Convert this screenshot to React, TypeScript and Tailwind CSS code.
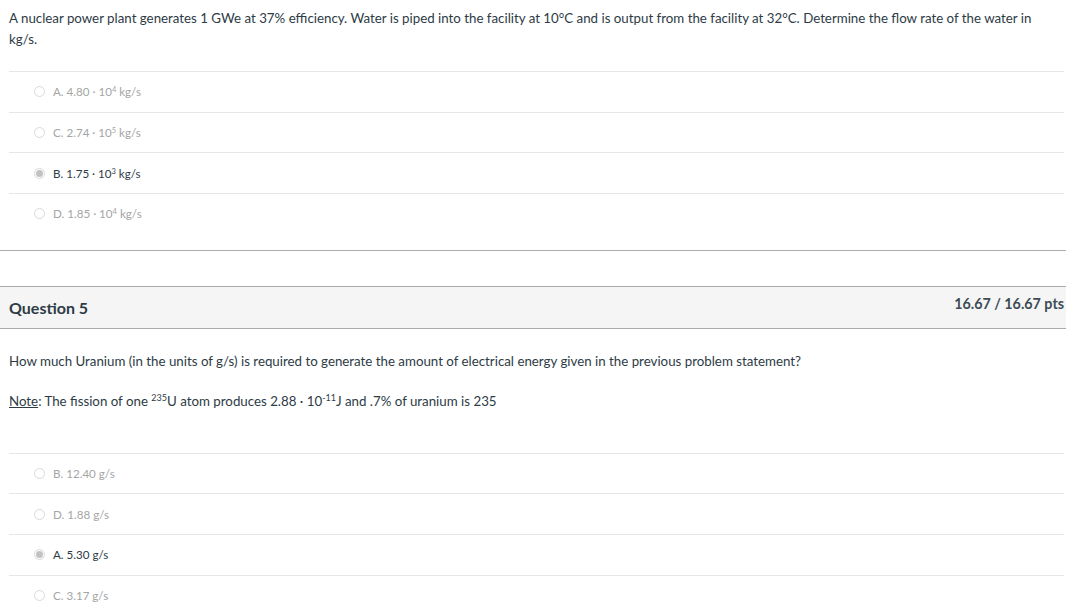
const Q4_ANSWERS = [
  { label: 'A. 4.80 · 10', exp: '4', unit: ' kg/s', selected: false },
  { label: 'C. 2.74 · 10', exp: '5', unit: ' kg/s', selected: false },
  { label: 'B. 1.75 · 10', exp: '3', unit: ' kg/s', selected: true },
  { label: 'D. 1.85 · 10', exp: '4', unit: ' kg/s', selected: false },
]

const Q5_ANSWERS = [
  { label: 'B. 12.40 g/s', selected: false },
  { label: 'D. 1.88 g/s', selected: false },
  { label: 'A. 5.30 g/s', selected: true },
  { label: 'C. 3.17 g/s', selected: false },
]

function Radio({ checked }: { checked: boolean }) {
  return (
    <span className="flex h-[11px] w-[11px] flex-shrink-0 items-center justify-center rounded-full border border-[#d9d9d9] bg-white">
      {checked && <span className="h-[7px] w-[7px] rounded-full bg-[#c2c2c2]" />}
    </span>
  )
}

function AnswerRow({ checked, children }: { checked: boolean; children: React.ReactNode }) {
  return (
    <div className="flex h-[40.7px] items-center gap-[8px] border-t border-[#e6e6e6] pl-[25px]">
      <Radio checked={checked} />
      <span className={`text-[11.6px] ${checked ? 'text-[#2d3b45]' : 'text-[#a5a5a5]'}`}>{children}</span>
    </div>
  )
}

export default function App() {
  return (
    <div className="min-h-screen bg-white text-[#2d3b45]" style={{ fontFamily: 'Lato, "Noto Sans", sans-serif' }}>

      {/* Question 4 */}
      <div className="border-b border-[#ababab] pb-[16px]">
        <p className="px-[9px] pt-[8px] text-[13.3px] leading-[21px]">
          A nuclear power plant generates 1 GWe at 37% efficiency. Water is piped into the facility at 10°C and is output from the facility at 32°C. Determine the flow rate of the water in kg/s.
        </p>
        <div className="mt-[21px] ml-[9px] mr-[2px]">
          {Q4_ANSWERS.map(a => (
            <AnswerRow key={a.label} checked={a.selected}>
              {a.label}
              <sup className="text-[7.5px]">{a.exp}</sup>
              {a.unit}
            </AnswerRow>
          ))}
        </div>
      </div>

      {/* Question 5 */}
      <div className="mt-[35px]">
        <div className="flex h-[43px] items-center justify-between border-y border-[#ababab] bg-[#f5f5f5] pl-[9px] pr-[2px]">
          <h3 className="pt-[1px] text-[16px] font-bold">Question 5</h3>
          <span className="mb-[7px] text-[14.3px] font-bold text-[#3d4b55]">16.67 / 16.67 pts</span>
        </div>
        <div className="px-[9px] pt-[22px] text-[13.3px] leading-[21px]">
          <p>How much Uranium (in the units of g/s) is required to generate the amount of electrical energy given in the previous problem statement?</p>
          <p className="mt-[19px]">
            <span className="underline">Note</span>: The fission of one <sup className="text-[9px]">235</sup>U atom produces 2.88 · 10<sup className="text-[9px]">-11</sup>J and .7% of uranium is 235
          </p>
        </div>
        <div className="mt-[41px] ml-[9px] mr-[2px]">
          {Q5_ANSWERS.map(a => (
            <AnswerRow key={a.label} checked={a.selected}>
              {a.label}
            </AnswerRow>
          ))}
        </div>
      </div>
    </div>
  )
}
